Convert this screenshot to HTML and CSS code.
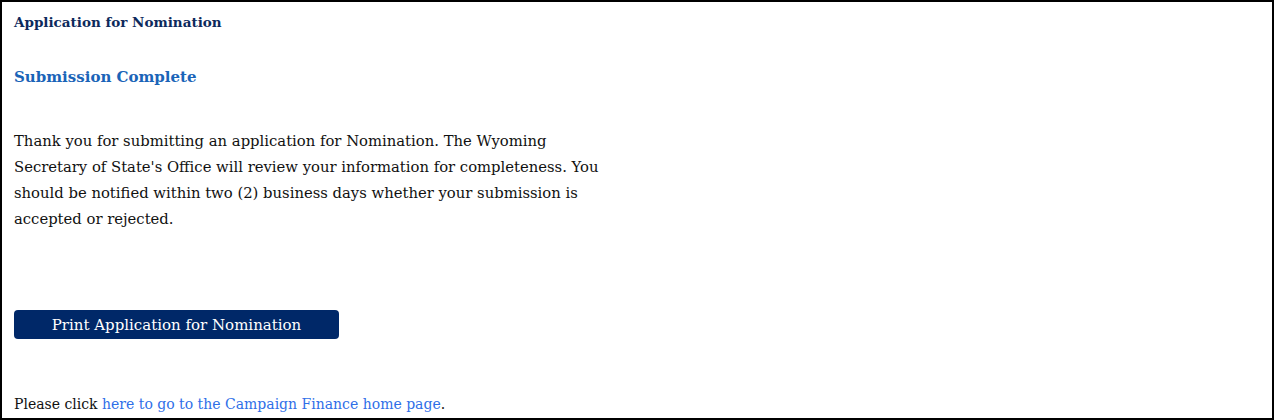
FILE: index.html
```html
<!DOCTYPE html>
<html>
<head>
<meta charset="utf-8">
<link rel="stylesheet" href="styles.css">
</head>
<body>
<div class="frame">
  <div class="page-title">Application for Nomination</div>
  <h2 class="status">Submission Complete</h2>
  <p class="message">Thank you for submitting an application for Nomination. The Wyoming Secretary of State's Office will review your information for completeness. You should be notified within two (2) business days whether your submission is accepted or rejected.</p>
  <div class="actions"><button class="print-btn" type="button">Print Application for Nomination</button></div>
  <p class="footer-note">Please click <a href="#">here to go to the Campaign Finance home page</a>.</p>
</div>
</body>
</html>
```
FILE: styles.css
```css
html, body {
  margin: 0;
  padding: 0;
  background: #fff;
}
.frame {
  box-sizing: border-box;
  width: 1274px;
  height: 420px;
  border: 2px solid #000;
  padding: 0 12px;
  font-family: "DejaVu Serif", serif;
  font-size: 14px;
  color: #111;
  overflow: hidden;
}
.page-title {
  margin-top: 11px;
  font-size: 13.5px;
  font-weight: bold;
  color: #0d2a5c;
  line-height: 18px;
}
.status {
  margin: 35px 0 0;
  font-size: 15px;
  font-weight: bold;
  color: #1a64b8;
  line-height: 22px;
}
.message {
  margin: 40px 0 0;
  width: 600px;
  font-size: 14.8px;
  line-height: 26px;
}
.actions {
  margin-top: 78px;
}
.print-btn {
  width: 325px;
  height: 29px;
  border: none;
  border-radius: 4px;
  background: #002868;
  color: #fff;
  font-family: "DejaVu Serif", serif;
  font-size: 15px;
  padding: 0;
}
.footer-note {
  margin: 55px 0 0;
  line-height: 20px;
}
.footer-note a {
  color: #2f6fe8;
  text-decoration: none;
}
```
